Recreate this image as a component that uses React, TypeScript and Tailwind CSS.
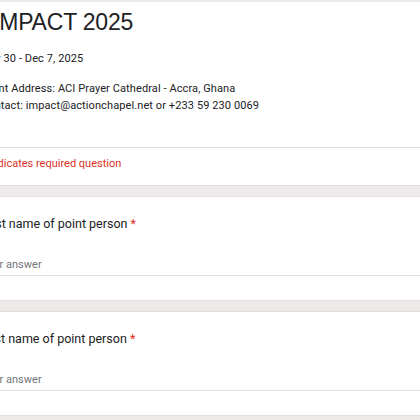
const roboto = { fontFamily: 'Roboto, "Liberation Sans", Arial, sans-serif' }

const QuestionCard = ({ label }: { label: string }) => {
  return (
    <div className="bg-white border-y border-[#e2dede] px-[24px] pt-[18px] pb-[24px]">
      <div className="text-[12.5px] leading-[18px] text-[#202124]">
        {label} <span className="text-[#d93025]">*</span>
      </div>
      <div className="mt-[24px] border-b border-[#e0e0e0] pb-[2px] text-[11px] leading-[16px] text-[#70757a]">
        Your answer
      </div>
    </div>
  )
}

export default function App() {
  return (
    <div className="h-[420px] w-[420px] overflow-hidden bg-[#eeeaea]" style={roboto}>
      <div className="-ml-[43px] flex w-[520px] flex-col gap-[10px] pt-[2px]">
        <div className="bg-white border-b border-[#e2dede] px-[24px] pt-[4px]">
          <h1
            className="ml-[12px] text-[23px] leading-[32px] font-normal tracking-[-0.2px] text-[#202124]"
            style={{ fontFamily: '"Liberation Sans", Arial, sans-serif' }}
          >
            IMPACT 2025
          </h1>
          <div className="mt-[13px] text-[11px] leading-[16px] tracking-[0.1px] text-[#202124]">
            Nov 30 - Dec 7, 2025
          </div>
          <div className="mt-[13px] text-[11px] leading-[17px] tracking-[0.1px] text-[#202124]">
            <div>Event Address: ACI Prayer Cathedral - Accra, Ghana</div>
            <div>Contact: impact@actionchapel.net or +233 59 230 0069</div>
          </div>
          <div className="mt-[33px] -mx-[24px] border-t border-[#dadce0] px-[24px] pt-[8px] pb-[13px] text-[11px] leading-[16px] text-[#d93025]">
            * Indicates required question
          </div>
        </div>
        <QuestionCard label="First name of point person" />
        <QuestionCard label="Last name of point person" />
        <div className="h-[40px] bg-white" />
      </div>
    </div>
  )
}
